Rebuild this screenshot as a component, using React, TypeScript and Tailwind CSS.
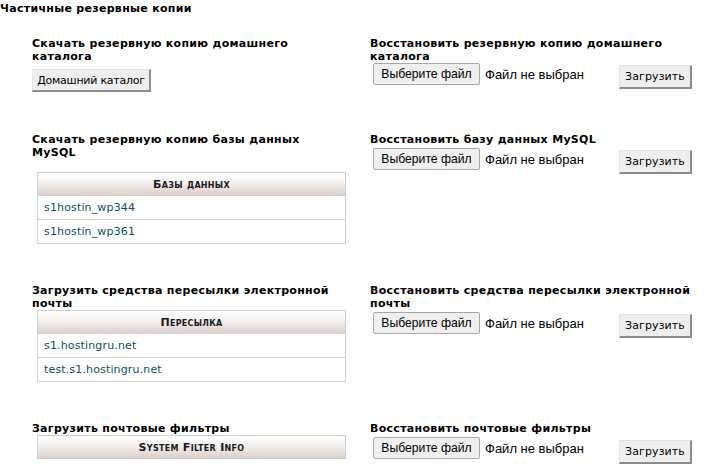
import React from "react";

const headBg =
  "bg-[linear-gradient(to_bottom,#ffffff_0%,#f7f4f2_35%,#e9e1dc_70%,#dcd1cb_100%)]";

function GrayButton({ children, className = "" }: { children: React.ReactNode; className?: string }) {
  return (
    <div
      className={
        "flex items-center bg-[#eeeeee] border-t border-l border-t-[#e2e2e2] border-l-[#e2e2e2] border-r-2 border-b-2 border-r-[#8c8c8c] border-b-[#8c8c8c] text-black whitespace-nowrap " +
        className
      }
    >
      {children}
    </div>
  );
}

function FileRow({ fileMt = "mt-[1px]", upMt = "mt-[3px]" }: { fileMt?: string; upMt?: string }) {
  return (
    <div className="flex items-start">
      <div className={"ml-[3px] flex items-center " + fileMt}>
        <div className="h-[22px] w-[107px] flex items-center justify-center bg-[#efefef] border border-[#a8a8a8] rounded-[2px] font-['Liberation_Sans',Arial,sans-serif] text-[12.2px] text-black">
          Выберите файл
        </div>
        <span className="ml-[5px] font-['Liberation_Sans',Arial,sans-serif] text-[13px] text-black">
          Файл не выбран
        </span>
      </div>
      <GrayButton className={"ml-auto mr-[14px] h-[24px] w-[73px] justify-center tracking-[0.1px] " + upMt}>Загрузить</GrayButton>
    </div>
  );
}

function DataTable({ title, rows, className = "" }: { title: string; rows: string[]; className?: string }) {
  return (
    <div className={"ml-[5px] w-[309px] border border-[#cfcfcf] " + className}>
      <div className={"h-[22px] flex items-center justify-center font-bold [font-variant:small-caps] tracking-[0.3px] text-[#1a1a1a] " + headBg}>
        {title}
      </div>
      {rows.map((r) => (
        <div key={r} className="h-[24px] border-t border-[#cfcfcf] flex items-center pl-[6px] text-[#0f4f5c] tracking-[0.15px] bg-white">
          {r}
        </div>
      ))}
    </div>
  );
}

const H = "font-bold tracking-[0.3px]";

export default function App() {
  return (
    <div className="w-[706px] h-[469px] overflow-hidden bg-white text-black font-['DejaVu_Sans',Verdana,sans-serif] text-[11px] leading-[13px]">
      <div className="pt-[2px] font-bold tracking-[0.3px]">Частичные резервные копии</div>

      {/* Row 1 */}
      <div className="flex mt-[22px] pb-[41px]">
        <div className="w-[370px] shrink-0 pl-[32px] pr-[30px]">
          <div className={H}>Скачать резервную копию домашнего каталога</div>
          <GrayButton className="mt-[6px] h-[23px] w-[119px] justify-center tracking-[-0.25px]">Домашний каталог</GrayButton>
        </div>
        <div className="w-[336px] shrink-0">
          <div className={H + " pr-[8px]"}>Восстановить резервную копию домашнего каталога</div>
          <FileRow fileMt="mt-0" upMt="mt-[2px]" />
        </div>
      </div>

      {/* Row 2 */}
      <div className="flex pb-[40px]">
        <div className="w-[370px] shrink-0 pl-[32px] pr-[30px]">
          <div className={H}>Скачать резервную копию базы данных MySQL</div>
          <DataTable className="mt-[13px]" title="Базы данных" rows={["s1hostin_wp344", "s1hostin_wp361"]} />
        </div>
        <div className="w-[336px] shrink-0">
          <div className={H + " pr-[8px]"}>Восстановить базу данных MySQL</div>
          <FileRow fileMt="mt-[2px]" upMt="mt-[4px]" />
        </div>
      </div>

      {/* Row 3 */}
      <div className="flex pb-[40px]">
        <div className="w-[370px] shrink-0 pl-[32px] pr-[20px]">
          <div className={H}>Загрузить средства пересылки электронной почты</div>
          <DataTable title="Пересылка" rows={["s1.hostingru.net", "test.s1.hostingru.net"]} />
        </div>
        <div className="w-[336px] shrink-0">
          <div className={H}>Восстановить средства пересылки электронной почты</div>
          <FileRow fileMt="mt-[2px]" upMt="mt-[4px]" />
        </div>
      </div>

      {/* Row 4 */}
      <div className="flex">
        <div className="w-[370px] shrink-0 pl-[32px] pr-[30px]">
          <div className={H}>Загрузить почтовые фильтры</div>
          <DataTable title="System Filter Info" rows={[]} />
        </div>
        <div className="w-[336px] shrink-0">
          <div className={H + " pr-[8px]"}>Восстановить почтовые фильтры</div>
          <FileRow fileMt="mt-[2px]" upMt="mt-[5px]" />
        </div>
      </div>
    </div>
  );
}
